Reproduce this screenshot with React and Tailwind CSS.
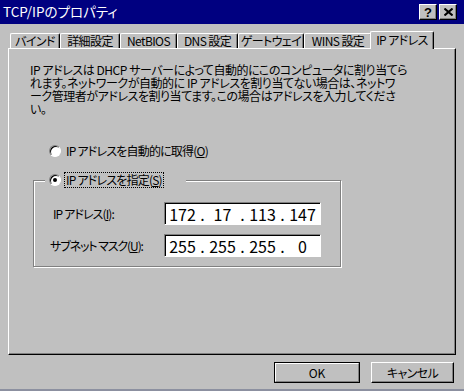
const jp = "font-['Noto_Sans_CJK_JP',sans-serif] [font-feature-settings:'palt']";

function Radio({ checked }) {
  return (
    <span className="w-[12px] h-[12px] shrink-0 rounded-full bg-white border border-t-[#808080] border-l-[#808080] border-r-white border-b-white shadow-[inset_1px_1px_0_#000] flex items-center justify-center">
      {checked && <span className="w-[4px] h-[4px] rounded-full bg-black" />}
    </span>
  );
}

function Tab({ label, w }) {
  return (
    <div
      className={`h-[15px] border-t border-l border-white border-r border-r-black shadow-[inset_-1px_0_0_#808080] rounded-t-[2px] flex items-center justify-center text-[12px] leading-none text-black whitespace-nowrap tracking-[-0.6px] ${w}`}
    >
      {label}
    </div>
  );
}

function IpField({ parts }) {
  return (
    <div className="w-[157px] h-[23px] bg-white border border-t-[#808080] border-l-[#808080] border-r-white border-b-white shadow-[inset_1px_1px_0_#000] flex items-center pl-[1px] text-[16px] leading-none tracking-normal font-['Liberation_Sans_Narrow','Noto_Sans_CJK_JP',sans-serif]">
      {parts.map((p, i) => (
        <div key={i} className="flex items-center">
          {i > 0 && <span className="w-[7px] text-center">.</span>}
          <span className="w-[33px] text-center">{p}</span>
        </div>
      ))}
    </div>
  );
}

export default function App() {
  return (
    <div className={`w-[464px] h-[391px] bg-[#c0c0c0] flex flex-col border-b-2 border-[#8c90a0] overflow-hidden ${jp}`}>
      {/* Title bar */}
      <div className="h-[24px] shrink-0 bg-[#000080] flex items-center justify-between pl-[3px] pr-[7px]">
        <span className="text-white text-[13.5px] leading-none">TCP/IPのプロパティ</span>
        <div className="flex gap-[2px]">
          <div className="w-[18px] h-[16px] bg-[#c0c0c0] border-t border-l border-white border-r border-b border-r-black border-b-black shadow-[inset_-1px_-1px_0_#808080] flex items-center justify-center text-[13px] font-bold leading-none font-['Liberation_Sans',sans-serif]">
            ?
          </div>
          <div className="w-[18px] h-[16px] bg-[#c0c0c0] border-t border-l border-white border-r border-b border-r-black border-b-black shadow-[inset_-1px_-1px_0_#808080] flex items-center justify-center">
            <svg width="9" height="8" viewBox="0 0 9 8">
              <path d="M0.5 0.5L8.5 7.5M8.5 0.5L0.5 7.5" stroke="#000" strokeWidth="2" />
            </svg>
          </div>
        </div>
      </div>

      <div className="px-[8px]">
        {/* Tabs */}
        <div className="flex items-end pl-[2px] mt-[7px]">
          <Tab label="バインド" w="w-[50px]" />
          <Tab label="詳細設定" w="w-[60px]" />
          <Tab label="NetBIOS" w="w-[57px]" />
          <Tab label="DNS 設定" w="w-[61px]" />
          <Tab label="ゲートウェイ" w="w-[66px]" />
          <Tab label="WINS 設定" w="w-[68px]" />
          <div className="relative z-10 w-[64px] h-[18px] -ml-[2px] -mb-[1px] bg-[#c0c0c0] border-t border-l border-white border-r border-r-black shadow-[inset_-1px_0_0_#808080] rounded-t-[2px] flex items-start justify-center pt-[2px] text-[12px] leading-none tracking-[-0.6px] whitespace-nowrap">
            IP アドレス
          </div>
        </div>

        {/* Panel */}
        <div className="h-[307px] border-t border-l border-white border-r border-b border-r-black border-b-black shadow-[inset_-1px_-1px_0_#808080] pl-[21px] pt-[14px]">
          <div className="text-[12px] leading-[13px] text-black tracking-[-0.45px]">
            <div className="whitespace-nowrap">IP アドレスは DHCP サーバーによって自動的にこのコンピュータに割り当てら</div>
            <div className="whitespace-nowrap">れます。ネットワークが自動的に IP アドレスを割り当てない場合は、ネットワ</div>
            <div className="whitespace-nowrap">ーク管理者がアドレスを割り当てます。この場合はアドレスを入力してくださ</div>
            <div className="whitespace-nowrap">い。</div>
          </div>

          <div className="mt-[28px] h-[16px] flex items-center pl-[19px] gap-[5px] text-[12px] leading-none tracking-[-0.8px] whitespace-nowrap">
            <Radio />
            <span>
              IP アドレスを自動的に取得(<span className="underline">O</span>)
            </span>
          </div>

          {/* Group box */}
          <div className="relative mt-[21px] ml-[3px] w-[308px] h-[87px] border border-[#808080] shadow-[1px_1px_0_#fff,inset_1px_1px_0_#fff] pt-[21px] flex flex-col gap-[9px]">
            <div className="absolute left-[11px] top-[-10px] h-[18px] bg-[#c0c0c0] flex items-center pl-[4px] pr-[22px] gap-[3px] text-[12px] leading-none tracking-[-0.8px] whitespace-nowrap">
              <Radio checked />
              <span className="border border-dotted border-black px-[1px] py-[1px]">
                IP アドレスを指定(<span className="underline">S</span>)
              </span>
            </div>
            <div className="flex items-center">
              <span className="w-[130px] pl-[19px] text-[12px] leading-none whitespace-nowrap tracking-[-0.9px]">
                IP アドレス(<span className="underline">I</span>):
              </span>
              <IpField parts={["172", "17", "113", "147"]} />
            </div>
            <div className="flex items-center">
              <span className="w-[130px] pl-[16px] text-[12px] leading-none whitespace-nowrap tracking-[-1.1px]">
                サブネット マスク(<span className="underline">U</span>):
              </span>
              <IpField parts={["255", "255", "255", "0"]} />
            </div>
          </div>
        </div>
      </div>

      {/* Buttons */}
      <div className="mt-[7px] flex justify-end pr-[10px] gap-[11px] text-[12px] leading-none">
        <div className="w-[86px] h-[21px] border border-black">
          <div className="w-full h-full border-t border-l border-white border-r border-b border-r-[#808080] border-b-[#808080] flex items-center justify-center">
            OK
          </div>
        </div>
        <div className="w-[83px] h-[21px] border-t border-l border-white border-r border-b border-r-black border-b-black shadow-[inset_-1px_-1px_0_#808080] flex items-center justify-center tracking-[-0.6px]">
          キャンセル
        </div>
      </div>
    </div>
  );
}
